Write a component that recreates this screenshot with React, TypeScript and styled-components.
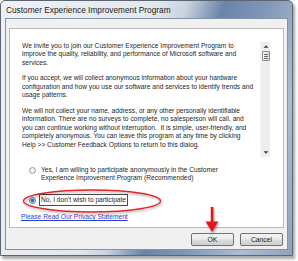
import React from "react";
import styled, { createGlobalStyle } from "styled-components";

const Global = createGlobalStyle`
  html, body { margin: 0; padding: 0; background: #ffffff; }
  body { width: 298px; height: 261px; overflow: hidden; font-family: "Liberation Sans", Arial, sans-serif; }
  * { box-sizing: border-box; }
`;

const Page = styled.div`
  width: 298px;
  height: 261px;
  padding: 0;
`;

const Window = styled.div`
  position: relative;
  width: 293px;
  height: 256px;
  border: 1px solid #5b6573;
  border-radius: 5px 5px 0 0;
  background: linear-gradient(
    108deg,
    #eef1f5 0%,
    #e3e8ee 42%,
    #c9d3df 50%,
    #6a84a9 60%,
    #8198b8 72%,
    #aebdd0 86%,
    #8ea3c0 100%
  );
  box-shadow: 2px 3px 3px rgba(60, 60, 60, 0.45);
  display: flex;
  flex-direction: column;
`;

const TitleBar = styled.div`
  height: 17px;
  padding-left: 5px;
  display: flex;
  align-items: center;
  font-family: "Liberation Sans", Arial, sans-serif;
  font-size: 8.3px;
  color: #1b1b1b;
  white-space: nowrap;
`;

const Client = styled.div`
  flex: 1;
  margin: 0 4px 5px 4px;
  border: 1px solid #8593a6;
  background: #f0f0f0;
  padding: 9px 3px 3px 3px;
  display: flex;
  flex-direction: column;
`;

const Panel = styled.div`
  height: 200px;
  background: #ffffff;
  border: 1px solid #b9b9b9;
  padding: 13px 13px 0 12px;
  display: flex;
  flex-direction: column;
  font-size: 6.65px;
  line-height: 8.45px;
  color: #262626;
`;

const TextArea = styled.div`
  height: 115px;
  display: flex;
  flex-direction: row;
`;

const Text = styled.div`
  flex: 1;
  white-space: nowrap;
  overflow: hidden;
`;

const Para = styled.p`
  margin: 0 0 7px 0;
`;

const ScrollBar = styled.div`
  width: 10px;
  margin-left: 2px;
  background: #eeeeee;
  border-left: 1px solid #f7f7f7;
  display: flex;
  flex-direction: column;
  align-items: center;
  justify-content: space-between;
  padding: 2px 0 2px 0;
`;

const ScrollTop = styled.div`
  display: flex;
  flex-direction: column;
  align-items: center;
  gap: 2px;
`;

const Arrow = styled.svg`
  width: 6px;
  height: 5px;
  display: block;
`;

const Thumb = styled.div`
  width: 8px;
  height: 10px;
  border: 1px solid #8c8c8c;
  border-radius: 1px;
  background: linear-gradient(90deg, #f4f4f4, #dcdcdc);
  display: flex;
  flex-direction: column;
  align-items: center;
  justify-content: center;
  gap: 1px;
`;

const Grip = styled.div`
  width: 4px;
  height: 1px;
  background: #6d6d6d;
`;

const Options = styled.div`
  margin-top: 9px;
  padding-left: 7px;
  display: flex;
  flex-direction: column;
`;

const OptionRow = styled.div<{ $gap?: number }>`
  display: flex;
  align-items: flex-start;
  margin-top: ${(p) => p.$gap ?? 0}px;
`;

const Radio = styled.span<{ $checked?: boolean }>`
  width: 7px;
  height: 7px;
  margin-top: 1px;
  border-radius: 50%;
  border: 1px solid ${(p) => (p.$checked ? "#4a6f9c" : "#9a9a9a")};
  background: ${(p) =>
    p.$checked
      ? "radial-gradient(circle at 50% 50%, #1c5ca8 0, #3a86d4 1.6px, #dfe8f2 2.2px, #f4f4f4 100%)"
      : "radial-gradient(circle at 40% 40%, #ffffff 0, #e2e2e2 100%)"};
  flex: none;
`;

const Label = styled.span<{ $focus?: boolean }>`
  margin-left: ${(p) => (p.$focus ? 3 : 5)}px;
  white-space: nowrap;
  ${(p) =>
    p.$focus
      ? `border: 1px solid #4a4a4a; padding: 1px 1px 1px 1px; margin-top: -2px;`
      : ""}
`;

const PrivacyLink = styled.a`
  margin-top: 7px;
  margin-left: -1px;
  color: #2b3fd1;
  text-decoration: underline;
  white-space: nowrap;
`;

const ButtonRow = styled.div`
  margin-top: 5px;
  margin-right: 1px;
  display: flex;
  justify-content: flex-end;
  gap: 6px;
`;

const Button = styled.button`
  width: 43px;
  height: 13px;
  padding: 0;
  border: 1px solid #707070;
  border-radius: 2px;
  background: linear-gradient(#f3f3f3 0%, #ebebeb 48%, #dddddd 52%, #cfcfcf 100%);
  font-family: "Liberation Sans", Arial, sans-serif;
  font-size: 6.8px;
  color: #1e1e1e;
  display: flex;
  align-items: center;
  justify-content: center;
`;

const Overlay = styled.svg`
  position: absolute;
  left: -1px;
  top: -1px;
  width: 298px;
  height: 261px;
  pointer-events: none;
  overflow: visible;
`;

export default function App() {
  return (
    <Page>
      <Global />
      <Window>
        <TitleBar>Customer Experience Improvement Program</TitleBar>
        <Client>
          <Panel>
            <TextArea>
              <Text>
                <Para>
                  We invite you to join our Customer Experience Improvement Program to
                  <br />
                  improve the quality, reliability, and performance of Microsoft software and
                  <br />
                  services.
                </Para>
                <Para>
                  If you accept, we will collect anonymous information about your hardware
                  <br />
                  configuration and how you use our software and services to identify trends and
                  <br />
                  usage patterns.
                </Para>
                <Para>
                  We will not collect your name, address, or any other personally identifiable
                  <br />
                  information. There are no surveys to complete, no salesperson will call, and
                  <br />
                  you can continue working without interruption.&nbsp; It is simple, user-friendly, and
                  <br />
                  completely anonymous. You can leave this program at any time by clicking
                  <br />
                  Help &gt;&gt; Customer Feedback Options to return to this dialog.
                </Para>
              </Text>
              <ScrollBar>
                <ScrollTop>
                  <Arrow viewBox="0 0 6 5">
                    <path d="M0.5 3.8 L3 1.2 L5.5 3.8 Z" fill="#3c3c3c" />
                  </Arrow>
                  <Thumb>
                    <Grip />
                    <Grip />
                    <Grip />
                  </Thumb>
                </ScrollTop>
                <Arrow viewBox="0 0 6 5">
                  <path d="M0.5 1.2 L3 3.8 L5.5 1.2 Z" fill="#3c3c3c" />
                </Arrow>
              </ScrollBar>
            </TextArea>
            <Options>
              <OptionRow>
                <Radio />
                <Label>
                  Yes, I am willing to participate anonymously in the Customer
                  <br />
                  Experience Improvement Program (Recommended)
                </Label>
              </OptionRow>
              <OptionRow $gap={13}>
                <Radio $checked />
                <Label $focus>No, I don't wish to participate</Label>
              </OptionRow>
            </Options>
            <PrivacyLink href="#">Please Read Our Privacy Statement</PrivacyLink>
          </Panel>
          <ButtonRow>
            <Button>OK</Button>
            <Button>Cancel</Button>
          </ButtonRow>
        </Client>
        <Overlay viewBox="0 0 298 261">
          <defs>
            <filter id="sh" x="-20%" y="-20%" width="140%" height="140%">
              <feDropShadow dx="1" dy="1.5" stdDeviation="1" floodColor="#000" floodOpacity="0.35" />
            </filter>
          </defs>
          <ellipse cx="92" cy="201" rx="68.5" ry="11" fill="none" stroke="#e0262b" strokeWidth="1.4" filter="url(#sh)" />
          <g filter="url(#sh)">
            <rect x="210.8" y="207" width="2.6" height="16" fill="#e3191e" />
            <path d="M205.5 221.5 L218.5 221.5 L212 232 Z" fill="#e3191e" />
          </g>
        </Overlay>
      </Window>
    </Page>
  );
}
